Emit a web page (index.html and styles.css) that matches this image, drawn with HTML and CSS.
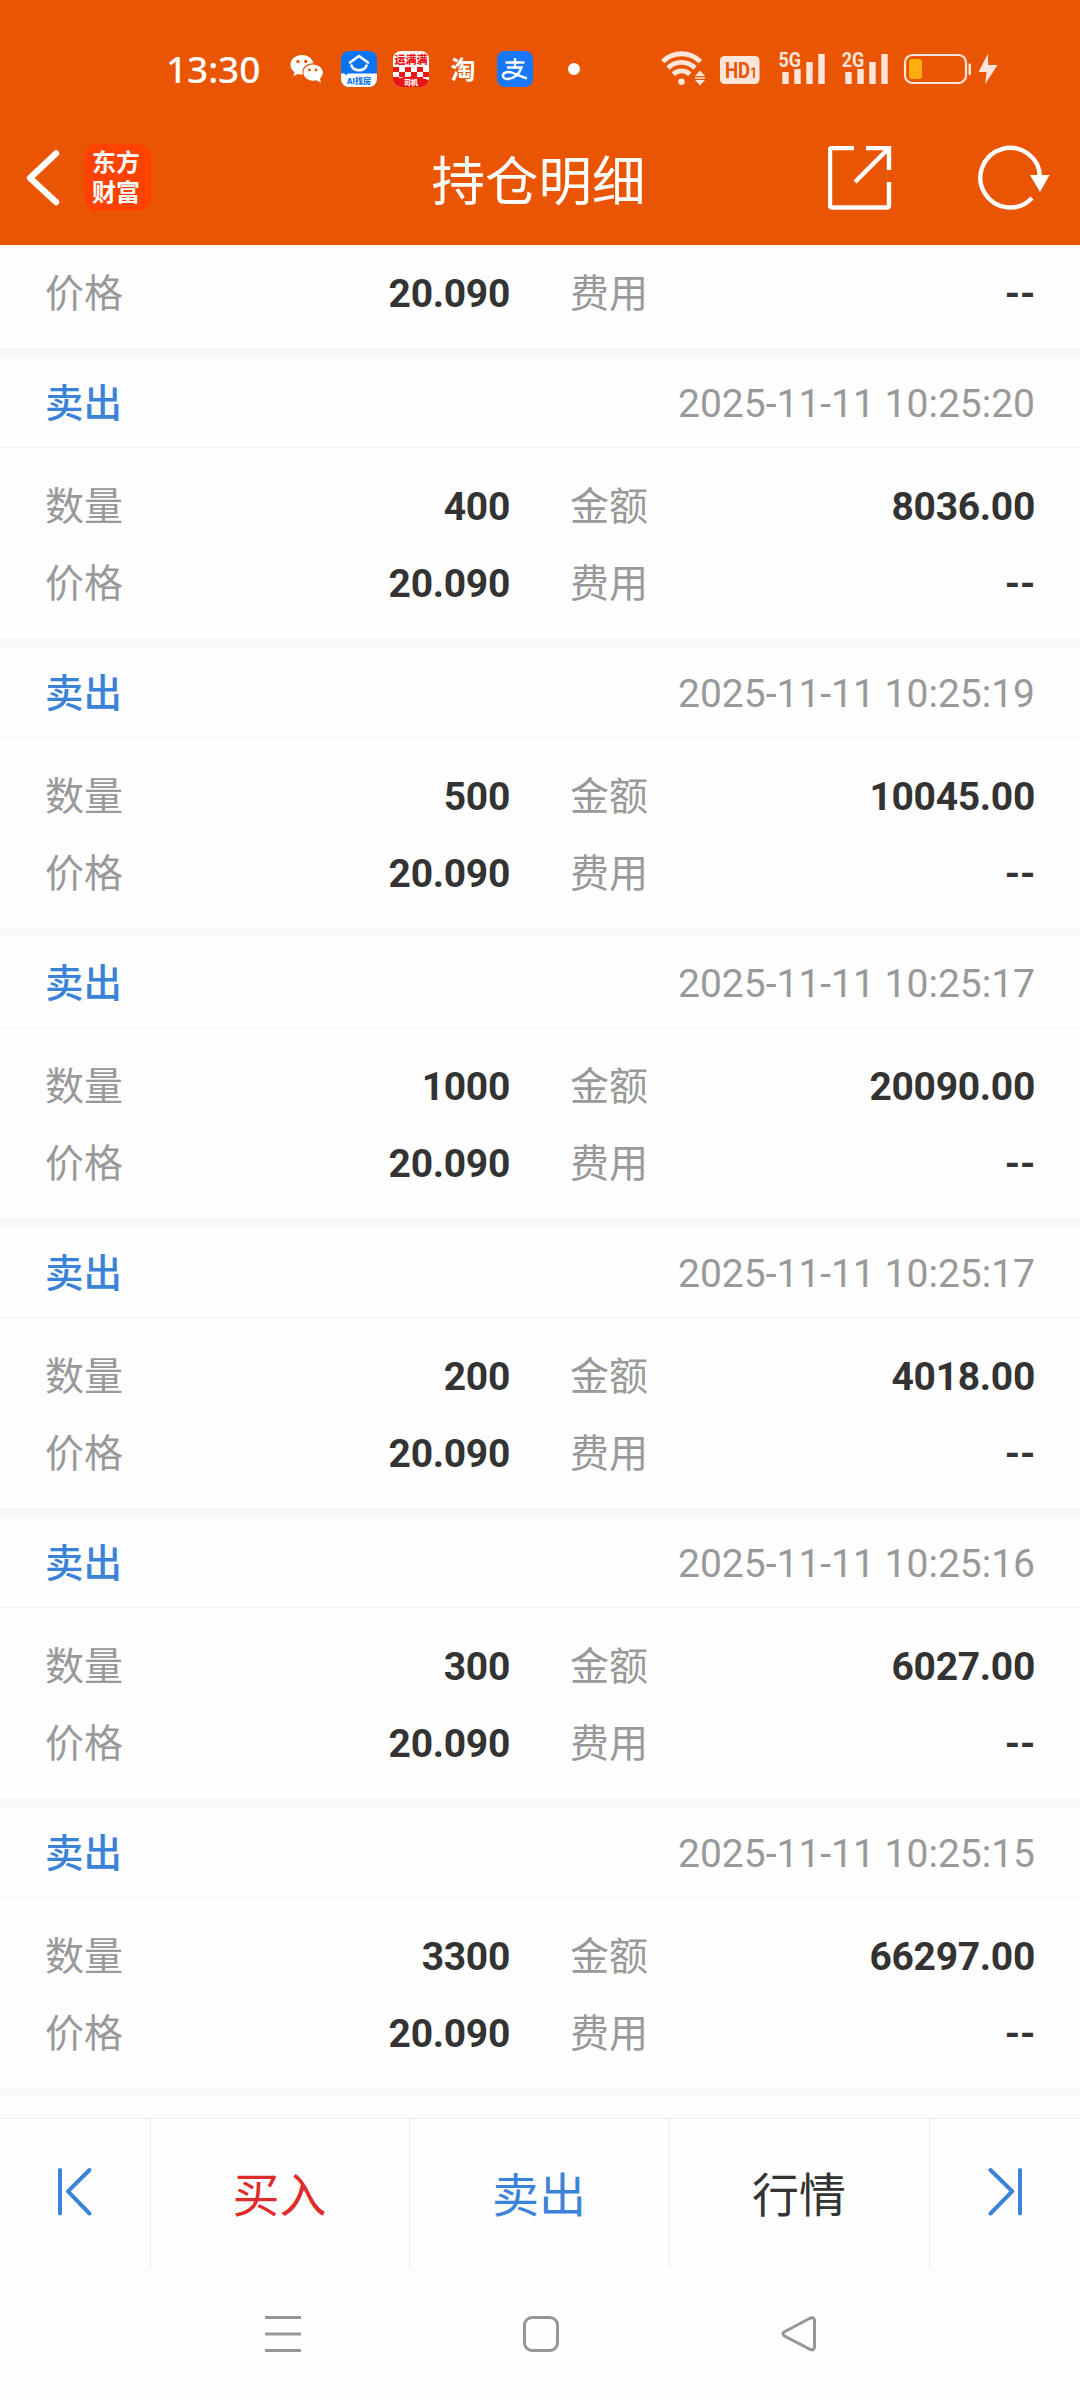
FILE: index.html
```html
<!DOCTYPE html>
<html lang="zh-CN">
<head>
<meta charset="utf-8">
<title>持仓明细</title>
<link rel="stylesheet" href="styles.css">
</head>
<body>
<div class="screen">
  <header class="top">
    <div class="status">
      <span class="clock">13:30</span>
      <svg class="wechat" width="34" height="30" viewBox="0 0 34 30">
        <path fill="#fff" d="M12 1C5.400 1 .5 5.300.5 10.800c0 3 1.500 5.600 4 7.400L3.300 22.300l4.600-2.300c1.300.4 2.700.6 4.100.6h.8c-.2-.8-.4-1.500-.4-2.400C12.400 13 17 9.300 22.600 9.300h.8C22.400 4.500 17.700 1 12 1z"/>
        <path fill="#fff" d="M22.900 10.500c-5.300 0-9.500 3.600-9.500 8.100s4.200 8.100 9.500 8.100c1.200 0 2.300-.2 3.400-.5l4.700 2.500-1.100-3.900c1.700-1.500 2.900-3.700 2.900-6.200 0-4.500-4.400-8.100-9.900-8.100z"/>
        <g fill="#ea5504"><circle cx="8" cy="7.500" r="1.700"/><circle cx="15.700" cy="7.500" r="1.700"/><circle cx="19.500" cy="16" r="1.400"/><circle cx="26" cy="16" r="1.400"/></g>
      </svg>
      <svg class="app app-house" width="36" height="36" viewBox="0 0 36 36">
        <rect width="36" height="36" rx="8" fill="#0b74f5"/>
        <path fill="#fff" d="M0 22.500h3.500L5 24.500l2-2h29V28a8 8 0 0 1-8 8H8a8 8 0 0 1-8-8z"/>
        <path d="M9 11.500 18 5l9 6.500M10.500 14.500a7.800 6.500 0 0 0 15 0" fill="none" stroke="#fff" stroke-width="2.600" stroke-linecap="round" stroke-linejoin="round"/>
        <text class="t-house" x="18" y="33.200" text-anchor="middle">AI找房</text>
      </svg>
      <svg class="app app-truck" width="36" height="36" viewBox="0 0 36 36">
        <clipPath id="r"><rect width="36" height="36" rx="8"/></clipPath>
        <g clip-path="url(#r)">
          <rect width="36" height="36" fill="#fff"/>
          <path fill="#ea1616" d="M0 16h6v5H0zM12 16h6v5h-6zM24 16h6v5h-6zM6 21h6v5H6zM18 21h6v5h-6zM30 21h6v5h-6zM0 26h6v5H0zM12 26h6v5h-6zM24 26h6v5h-6z"/>
          <path fill="#ea1616" d="M0 36v-7q18-7 36 0v7z"/>
        </g>
        <text class="t-truck" x="18" y="12.800" text-anchor="middle">运满满</text>
        <text class="t-driver" x="18" y="34" text-anchor="middle">司机</text>
      </svg>
      <span class="tao">淘</span>
      <svg class="app app-pay" width="36" height="36" viewBox="0 0 36 36">
        <rect width="36" height="36" rx="8" fill="#1878fb"/>
        <path d="M8.500 11.500h19M18 7v9M10 16.500h14.500C22 24 16 28 10.500 28c-3.500 0-5-2-4.500-4 .8-3 5.500-3.800 10-2 4.500 1.800 9 4.500 14 5.200" fill="none" stroke="#fff" stroke-width="2.400"/>
      </svg>
      <span class="dot"></span>
      <svg class="signals" width="340" height="50" viewBox="660 44 340 50">
        <g fill="none" stroke="#fde5da" stroke-width="4.800">
          <path d="M662.700 61.600a26.500 26.500 0 0 1 37.700 0"/>
          <path d="M668 68a19 19 0 0 1 27 0"/>
          <path d="M673.200 74.200a12 12 0 0 1 16.600 0"/>
        </g>
        <g fill="#fde5da">
          <circle cx="681.500" cy="81.700" r="3.200"/>
          <path d="M700 70.500l5 5.500h-10zM700 85.500l5-5.500h-10zM695 77.200h10v1.500h-10z"/>
          <rect x="720" y="56" width="39.500" height="28" rx="4.500"/>
          <path d="M782.300 72h6.400v12h-6.400zM794.300 69h6.400v15h-6.400zM806.300 62h6.400v22h-6.400zM818.300 54h6.400v30h-6.400z"/>
          <path d="M845.300 72h6.400v12h-6.400zM857.300 69h6.400v15h-6.400zM869.300 62h6.400v22h-6.400zM881.300 54h6.400v30h-6.400z"/>
          <rect x="968.500" y="63.500" width="2.500" height="11.500" rx="1"/>
          <path d="M988 53.500 978.500 72h8l-1.200 12 12.200-19h-9.300z"/>
        </g>
        <text class="t-hd" x="725" y="77.500" textLength="32" lengthAdjust="spacingAndGlyphs">HD<tspan class="t-one">1</tspan></text>
        <text class="t-net" x="778.500" y="67.300" textLength="22.500" lengthAdjust="spacingAndGlyphs">5G</text>
        <text class="t-net" x="841.800" y="67.300" textLength="22.500" lengthAdjust="spacingAndGlyphs">2G</text>
        <rect x="905" y="55" width="61" height="28" rx="7.500" fill="none" stroke="#fde5da" stroke-width="2.200"/>
        <rect x="909" y="59" width="13" height="20" rx="3" fill="#ffae0f"/>
      </svg>
    </div>
    <div class="titlebar">
      <div class="left">
        <svg width="36" height="60" viewBox="24 148 36 60"><path d="M56 153.500 30 178 56 202" fill="none" stroke="#fff" stroke-width="6.400" stroke-linecap="round" stroke-linejoin="round"/></svg>
        <div class="logo"><span>东方</span><span>财富</span></div>
      </div>
      <h1>持仓明细</h1>
      <div class="actions">
        <svg width="64" height="64" viewBox="828 146 64 64" fill="none" stroke="#fff" stroke-width="4.400"><path d="M854 148h-22q-2 0-2 2v55q0 2.500 2 2.500h55q2 0 2-2.500v-23M866 148h23v22M889 148 855 182"/></svg>
        <svg width="72" height="68" viewBox="978 143 72 68"><path d="M1032 197A29.800 29.800 0 1 1 1040 176" fill="none" stroke="#fff" stroke-width="4.400"/><path d="M1030 174h19.600L1040 191z" fill="#fff"/></svg>
      </div>
    </div>
  </header>

  <main class="list">
    <section class="card partial">
      <div class="row"><span class="label">价格</span><b>20.090</b><span class="label second">费用</span><b>--</b></div>
    </section>
    <section class="card">
      <div class="head"><strong>卖出</strong><time>2025-11-11 10:25:20</time></div>
      <div class="body">
        <div class="row"><span class="label">数量</span><b>400</b><span class="label second">金额</span><b>8036.00</b></div>
        <div class="row"><span class="label">价格</span><b>20.090</b><span class="label second">费用</span><b>--</b></div>
      </div>
    </section>
    <section class="card">
      <div class="head"><strong>卖出</strong><time>2025-11-11 10:25:19</time></div>
      <div class="body">
        <div class="row"><span class="label">数量</span><b>500</b><span class="label second">金额</span><b>10045.00</b></div>
        <div class="row"><span class="label">价格</span><b>20.090</b><span class="label second">费用</span><b>--</b></div>
      </div>
    </section>
    <section class="card">
      <div class="head"><strong>卖出</strong><time>2025-11-11 10:25:17</time></div>
      <div class="body">
        <div class="row"><span class="label">数量</span><b>1000</b><span class="label second">金额</span><b>20090.00</b></div>
        <div class="row"><span class="label">价格</span><b>20.090</b><span class="label second">费用</span><b>--</b></div>
      </div>
    </section>
    <section class="card">
      <div class="head"><strong>卖出</strong><time>2025-11-11 10:25:17</time></div>
      <div class="body">
        <div class="row"><span class="label">数量</span><b>200</b><span class="label second">金额</span><b>4018.00</b></div>
        <div class="row"><span class="label">价格</span><b>20.090</b><span class="label second">费用</span><b>--</b></div>
      </div>
    </section>
    <section class="card">
      <div class="head"><strong>卖出</strong><time>2025-11-11 10:25:16</time></div>
      <div class="body">
        <div class="row"><span class="label">数量</span><b>300</b><span class="label second">金额</span><b>6027.00</b></div>
        <div class="row"><span class="label">价格</span><b>20.090</b><span class="label second">费用</span><b>--</b></div>
      </div>
    </section>
    <section class="card">
      <div class="head"><strong>卖出</strong><time>2025-11-11 10:25:15</time></div>
      <div class="body">
        <div class="row"><span class="label">数量</span><b>3300</b><span class="label second">金额</span><b>66297.00</b></div>
        <div class="row"><span class="label">价格</span><b>20.090</b><span class="label second">费用</span><b>--</b></div>
      </div>
    </section>
  </main>

  <nav class="tabs">
    <a class="prev"><svg width="38" height="52" viewBox="57 2166 38 52"><path d="M61 2170v43.500M90.500 2170 69 2191.300l21.500 22.200"/></svg></a>
    <a class="buy">买入</a>
    <a class="sell">卖出</a>
    <a class="quote">行情</a>
    <a class="next"><svg width="38" height="52" viewBox="986 2166 38 52"><path d="M1020 2170v43.500M990.500 2170l21.700 21.300-21.700 22.200"/></svg></a>
  </nav>

  <footer class="system">
    <svg width="36" height="36" viewBox="0 0 36 36"><path d="M0 1.500h36M0 18h36M0 34.500h36"/></svg>
    <svg width="36" height="36" viewBox="0 0 36 36"><rect x="1.500" y="1.500" width="33" height="33" rx="7.500"/></svg>
    <svg width="36" height="36" viewBox="0 0 36 36"><path d="M29.500 2 3.500 15.700q-3.200 2 0 4.300L29.500 33.500q3.800 1.200 4-2.500V4.500q-.2-3.700-4-2.500z"/></svg>
  </footer>
</div>
</body>
</html>
```
FILE: styles.css
```css
* { box-sizing: border-box; }

body {
  margin: 0;
  background: #fefefe;
  font-family: Roboto, "Noto Sans CJK SC", sans-serif;
  color: #333;
}

svg { display: block; flex: none; }

.screen {
  width: 1080px;
  height: 2400px;
  display: flex;
  flex-direction: column;
  overflow: hidden;
}

.top {
  height: 245px;
  background: #ea5504;
  color: #fff;
}

.status {
  height: 138px;
  padding: 0 80px 0 166px;
  display: flex;
  align-items: center;
}

.clock {
  width: 124px;
  font: 500 37px/40px "Noto Sans", sans-serif;
  letter-spacing: -0.1px;
}

.app-house { margin-left: 17px; }
.app-truck { margin-left: 16px; }

.tao {
  width: 68px;
  text-align: center;
  font: 700 25px/34px "Noto Sans CJK SC", sans-serif;
  padding-bottom: 2px;
}

.dot {
  width: 12px;
  height: 12px;
  margin: 0 80px 0 35px;
  border-radius: 50%;
  background: #fff;
}

.t-house, .t-truck, .t-driver { font-family: "Noto Sans CJK SC", sans-serif; font-weight: 900; }
.t-house { font-size: 8px; fill: #0b74f5; }
.t-truck { font-size: 11px; fill: #ea1616; }
.t-driver { font-size: 7px; fill: #fff; }

.t-hd, .t-net { font-family: Roboto, sans-serif; font-weight: 700; }
.t-hd { font-size: 22px; fill: #ea5504; }
.t-one { font-size: 14px; }
.t-net { font-size: 21px; fill: #fde5da; }

.titlebar {
  height: 79px;
  padding: 0 30px 0 24px;
  display: grid;
  grid-template-columns: 300px 1fr 300px;
  align-items: center;
}

.left, .actions { display: flex; align-items: center; }
.left { gap: 24px; }
.actions { justify-content: flex-end; gap: 86px; }

.logo {
  width: 67px;
  height: 67px;
  padding: 2px 8px 5px 8px;
  border-radius: 13px;
  background: #ff4200;
  display: flex;
  flex-direction: column;
  font: 700 24px/30px "Noto Sans CJK SC", sans-serif;
}

.titlebar h1 {
  margin: 0;
  padding-left: 3px;
  text-align: center;
  font: 400 53.500px/79px "Noto Sans CJK SC", sans-serif;
}

.list { height: 1873px; overflow: hidden; }

.card { border-bottom: 9px solid #f6f8fa; }

.partial { height: 112px; padding-top: 11px; }

.head {
  height: 91px;
  padding: 4px 45px 0;
  border-bottom: 1px solid #f4f5f7;
  display: flex;
  justify-content: space-between;
  align-items: center;
  line-height: 86px;
}

.head strong { font-size: 38.500px; font-weight: 500; color: #3b82d9; }
.head time { font-size: 39px; color: #999; }

.body { height: 190px; padding-top: 21px; }

.row {
  height: 77px;
  padding: 0 45px;
  display: grid;
  grid-template-columns: 100px 365px 160px 365px;
  align-items: center;
  font-size: 39px;
  line-height: 77px;
}

.row b { text-align: right; font-weight: 700; letter-spacing: -0.3px; }
.label { color: #999; font-weight: 400; }
.second { padding-left: 60px; }

.tabs {
  height: 150px;
  border-top: 1px solid #ededed;
  display: grid;
  grid-template-columns: 151px 259px 260px 260px 150px;
}

.tabs a {
  display: flex;
  align-items: center;
  justify-content: center;
  padding: 0 1px 3px 0;
  border-right: 1px solid #ededed;
  font: 400 47px/146px "Noto Sans CJK SC", sans-serif;
}

.tabs .prev { padding-right: 0; }
.tabs a:last-child { border-right: 0; padding-right: 0; }

.tabs path {
  fill: none;
  stroke: #3b82d9;
  stroke-width: 4;
  stroke-linecap: round;
  stroke-linejoin: round;
}

.buy { color: #df2b2b; }
.sell { color: #3b82d9; }

.system {
  height: 132px;
  padding: 0 263px 0 265px;
  display: flex;
  align-items: center;
  justify-content: space-between;
}

.system svg { fill: none; stroke: #969696; stroke-width: 3; }
```
